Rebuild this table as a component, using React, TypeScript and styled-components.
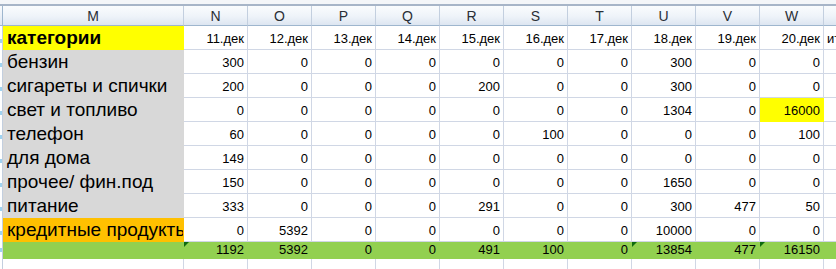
import styled, { createGlobalStyle, css } from "styled-components";

const GlobalStyle = createGlobalStyle`
  body {
    margin: 0;
    background: #ffffff;
    font-family: "Liberation Sans", Arial, sans-serif;
  }
`;

const GRID = "#d0d7e5";

const Page = styled.div`
  width: 836px;
  height: 269px;
  overflow: hidden;
  background: #ffffff;
`;

const TopBar = styled.div`
  height: 4px;
  background: #f4f6f9;
  border-bottom: 2px solid #a7b5c8;
`;

const Sheet = styled.div`
  display: grid;
  grid-template-columns: 3px 181px repeat(10, 64px) 64px;
  grid-template-rows: 20px repeat(9, 24px) 17px 24px;
`;

const Corner = styled.div`
  background: linear-gradient(#f9fbfd, #dfe7f2);
  border-right: 1px solid #9eb6ce;
  border-bottom: 1px solid #9eb6ce;
`;

const ColHead = styled.div`
  display: flex;
  align-items: center;
  justify-content: center;
  background: linear-gradient(#fafcfe 0%, #eef3f9 55%, #dde6f1 100%);
  border-right: 1px solid #c3cfdf;
  border-bottom: 1px solid #9eb6ce;
  font-size: 14px;
  color: #2a2f36;
  box-sizing: border-box;
`;

const RowEdge = styled.div<{ $mark?: boolean }>`
  position: relative;
  background: #ffffff;
  border-right: 1px solid #c3cfdf;
  box-sizing: border-box;
  ${(p) =>
    p.$mark &&
    css`
      &::after {
        content: "";
        position: absolute;
        left: 0;
        bottom: 7px;
        width: 2px;
        height: 4px;
        background: #9fd3f0;
      }
    `}
`;

const Cell = styled.div<{ $fill?: string; $align?: "left" | "right"; $flag?: boolean }>`
  position: relative;
  display: flex;
  align-items: flex-end;
  justify-content: ${(p) => (p.$align === "left" ? "flex-start" : "flex-end")};
  padding: 0 3px 3px 3px;
  box-sizing: border-box;
  background: ${(p) => p.$fill ?? "#ffffff"};
  border-right: 1px solid ${(p) => p.$fill ?? GRID};
  border-bottom: 1px solid ${(p) => p.$fill ?? GRID};
  font-size: 13px;
  line-height: 15px;
  color: #000000;
  white-space: nowrap;
  overflow: hidden;
  ${(p) =>
    p.$flag &&
    css`
      &::before {
        content: "";
        position: absolute;
        left: 0;
        top: 0;
        border-top: 5px solid #0e6b0e;
        border-right: 5px solid transparent;
      }
    `}
`;

const Category = styled(Cell)<{ $bold?: boolean }>`
  padding: 0 0 1px 4px;
  font-size: 19px;
  line-height: 21px;
  font-weight: ${(p) => (p.$bold ? 700 : 400)};
`;

const TotalCell = styled(Cell)`
  padding-bottom: 1px;
  font-size: 13px;
`;

const GRAY = "#d8d8d8";
const YELLOW = "#ffff00";
const ORANGE = "#ffc000";
const GREEN = "#92d050";

const letters = ["N", "O", "P", "Q", "R", "S", "T", "U", "V", "W"];
const dates = letters.map((_, i) => `${11 + i}.дек`);

type Row = { name: string; fill: string; values: number[]; hot?: number };

const rows: Row[] = [
  { name: "бензин", fill: GRAY, values: [300, 0, 0, 0, 0, 0, 0, 300, 0, 0] },
  { name: "сигареты и спички", fill: GRAY, values: [200, 0, 0, 0, 200, 0, 0, 300, 0, 0] },
  { name: "свет и топливо", fill: GRAY, values: [0, 0, 0, 0, 0, 0, 0, 1304, 0, 16000], hot: 9 },
  { name: "телефон", fill: GRAY, values: [60, 0, 0, 0, 0, 100, 0, 0, 0, 100] },
  { name: "для дома", fill: GRAY, values: [149, 0, 0, 0, 0, 0, 0, 0, 0, 0] },
  { name: "прочее/ фин.под", fill: GRAY, values: [150, 0, 0, 0, 0, 0, 0, 1650, 0, 0] },
  { name: "питание", fill: GRAY, values: [333, 0, 0, 0, 291, 0, 0, 300, 477, 50] },
  { name: "кредитные продукты", fill: ORANGE, values: [0, 5392, 0, 0, 0, 0, 0, 10000, 0, 0] },
];

const totals = [1192, 5392, 0, 0, 491, 100, 0, 13854, 477, 16150];
const flagged = [0, 7, 9];

export default function App() {
  return (
    <Page>
      <GlobalStyle />
      <TopBar />
      <Sheet>
        <Corner />
        <ColHead>M</ColHead>
        {letters.map((l) => (
          <ColHead key={l}>{l}</ColHead>
        ))}
        <ColHead />

        <RowEdge $mark />
        <Category $fill={YELLOW} $align="left" $bold>
          категории
        </Category>
        {dates.map((d) => (
          <Cell key={d}>{d}</Cell>
        ))}
        <Cell $align="left">итого</Cell>

        {rows.map((r) => (
          <>
            <RowEdge key={r.name + "-e"} $mark />
            <Category key={r.name} $fill={r.fill} $align="left">
              {r.name}
            </Category>
            {r.values.map((v, i) => (
              <Cell key={r.name + i} $fill={r.hot === i ? YELLOW : undefined}>
                {v}
              </Cell>
            ))}
            <Cell key={r.name + "-x"} />
          </>
        ))}

        <RowEdge $mark />
        <TotalCell $fill={GREEN} />
        {totals.map((v, i) => (
          <TotalCell key={"t" + i} $fill={GREEN} $flag={flagged.includes(i)}>
            {v}
          </TotalCell>
        ))}
        <TotalCell $fill={GREEN} />

        <RowEdge />
        <Cell />
        {letters.map((l) => (
          <Cell key={"e" + l} />
        ))}
        <Cell />
      </Sheet>
    </Page>
  );
}
